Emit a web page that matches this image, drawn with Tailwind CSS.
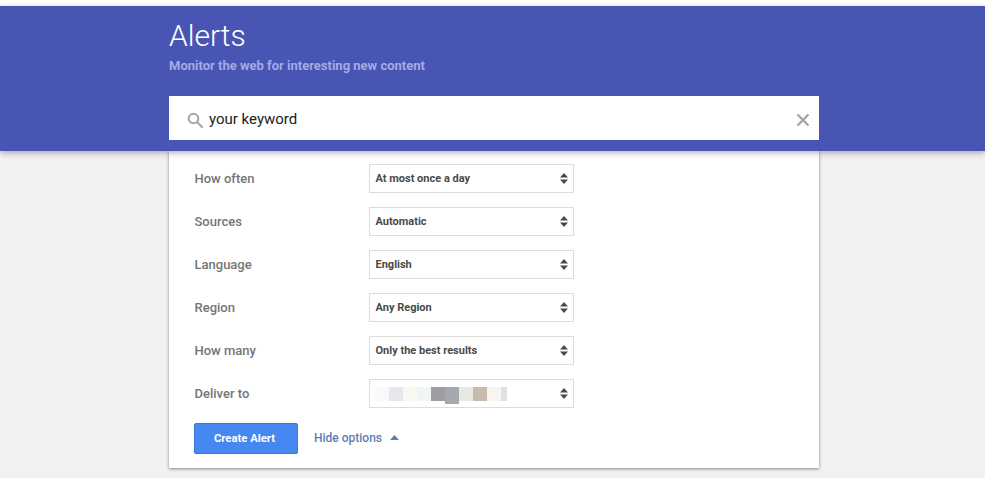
<!DOCTYPE html>
<html>
<head>
<meta charset="utf-8">
<script src="https://cdn.jsdelivr.net/npm/@tailwindcss/browser@4"></script>
</head>
<body class="m-0 h-[478px] w-[985px] overflow-hidden bg-[#f1f1f1] font-['Roboto',sans-serif]">
<div class="h-[6px] bg-white"></div>
<header class="relative z-10 h-[145px] bg-[#4855b3] shadow-[0_2px_6px_rgba(0,0,0,0.3)]">
  <div class="ml-[169px] w-[650px]">
    <h1 class="pt-[12px] text-[30px] leading-[36px] font-light text-white">Alerts</h1>
    <p class="mt-[3px] text-[13px] leading-[18px] font-bold text-[#a3abe6]">Monitor the web for interesting new content</p>
    <div class="mt-[21px] flex h-[44px] items-center bg-white pt-[3px] pr-[9px] pl-[18px]">
      <svg class="h-[16px] w-[16px] shrink-0" viewBox="0 0 16 16" fill="none" stroke="#a5a5a5" stroke-width="2"><circle cx="6.500" cy="6.500" r="4.800"/><path d="M10 10l5 5" stroke-linecap="round"/></svg>
      <span class="ml-[6px] flex-1 text-[15px] text-[#222]">your keyword</span>
      <svg class="h-[14px] w-[14px]" viewBox="0 0 14 14" stroke="#a5a5a5" stroke-width="2.400"><path d="M1.500 1.500l11 11M12.500 1.500l-11 11"/></svg>
    </div>
  </div>
</header>
<main class="ml-[169px] h-[317px] w-[650px] bg-white pt-[13px] pl-[25px] shadow-[0_1px_3px_rgba(0,0,0,0.45)]">
  <div class="flex flex-col gap-[14px]">
    <div class="flex items-center">
      <span class="w-[175px] pl-[0.5px] text-[13px] font-medium text-[#757575]">How often</span>
      <div class="flex h-[29px] w-[205px] items-center justify-between border border-[#dcdcdc] pr-[5px] pl-[5.500px] text-[11px] font-bold text-[#4a4a4a]">
        <span class="pt-[2px]">At most once a day</span>
        <svg class="h-[11px] w-[8px]" viewBox="0 0 8 11" fill="#4a4a4a"><path d="M4 0L8 4.500H0zM0 6.500h8L4 11z"/></svg>
      </div>
    </div>
    <div class="flex items-center">
      <span class="w-[175px] pl-[0.5px] text-[13px] font-medium text-[#757575]">Sources</span>
      <div class="flex h-[29px] w-[205px] items-center justify-between border border-[#dcdcdc] pr-[5px] pl-[5.500px] text-[11px] font-bold text-[#4a4a4a]">
        <span class="pt-[2px]">Automatic</span>
        <svg class="h-[11px] w-[8px]" viewBox="0 0 8 11" fill="#4a4a4a"><path d="M4 0L8 4.500H0zM0 6.500h8L4 11z"/></svg>
      </div>
    </div>
    <div class="flex items-center">
      <span class="w-[175px] pl-[0.5px] text-[13px] font-medium text-[#757575]">Language</span>
      <div class="flex h-[29px] w-[205px] items-center justify-between border border-[#dcdcdc] pr-[5px] pl-[5.500px] text-[11px] font-bold text-[#4a4a4a]">
        <span class="pt-[2px]">English</span>
        <svg class="h-[11px] w-[8px]" viewBox="0 0 8 11" fill="#4a4a4a"><path d="M4 0L8 4.500H0zM0 6.500h8L4 11z"/></svg>
      </div>
    </div>
    <div class="flex items-center">
      <span class="w-[175px] pl-[0.5px] text-[13px] font-medium text-[#757575]">Region</span>
      <div class="flex h-[29px] w-[205px] items-center justify-between border border-[#dcdcdc] pr-[5px] pl-[5.500px] text-[11px] font-bold text-[#4a4a4a]">
        <span class="pt-[2px]">Any Region</span>
        <svg class="h-[11px] w-[8px]" viewBox="0 0 8 11" fill="#4a4a4a"><path d="M4 0L8 4.500H0zM0 6.500h8L4 11z"/></svg>
      </div>
    </div>
    <div class="flex items-center">
      <span class="w-[175px] pl-[0.5px] text-[13px] font-medium text-[#757575]">How many</span>
      <div class="flex h-[29px] w-[205px] items-center justify-between border border-[#dcdcdc] pr-[5px] pl-[5.500px] text-[11px] font-bold text-[#4a4a4a]">
        <span class="pt-[2px]">Only the best results</span>
        <svg class="h-[11px] w-[8px]" viewBox="0 0 8 11" fill="#4a4a4a"><path d="M4 0L8 4.500H0zM0 6.500h8L4 11z"/></svg>
      </div>
    </div>
    <div class="flex items-center">
      <span class="w-[175px] pl-[0.5px] text-[13px] font-medium text-[#757575]">Deliver to</span>
      <div class="flex h-[29px] w-[205px] items-center justify-between border border-[#dcdcdc] pr-[5px] pl-[5px]">
        <div class="flex h-[14px] items-start">
          <i class="h-[14px] w-[14px] bg-[#f8f9fb]"></i>
          <i class="h-[14px] w-[14px] bg-[#e6e7ec]"></i>
          <i class="h-[14px] w-[14px] bg-[#fbf8f1]"></i>
          <i class="h-[14px] w-[14px] bg-[#f0f6f3]"></i>
          <i class="h-[14px] w-[14px] bg-[#9c9da0]"></i>
          <i class="h-[17px] w-[14px] bg-[#a5a8ad]"></i>
          <i class="h-[14px] w-[14px] bg-[#e8e8e4]"></i>
          <i class="h-[14px] w-[14px] bg-[#c9bbac]"></i>
          <i class="h-[14px] w-[14px] bg-[#f8f4f0]"></i>
          <i class="h-[14px] w-[6px] bg-[#e0e0e2]"></i>
        </div>
        <svg class="h-[11px] w-[8px]" viewBox="0 0 8 11" fill="#4a4a4a"><path d="M4 0L8 4.500H0zM0 6.500h8L4 11z"/></svg>
      </div>
    </div>
  </div>
  <div class="mt-[15px] flex items-center">
    <button class="h-[31px] w-[104px] rounded-[2px] border border-[#3a76d8] bg-[#4688f1] pt-[1px] pr-[3px] text-[11.300px] font-bold text-white">Create Alert</button>
    <span class="ml-[16px] pb-[2px] text-[12px] font-medium text-[#5b7fb5]">Hide options</span>
    <svg class="mb-[2px] ml-[8px] h-[5px] w-[9px]" viewBox="0 0 9 5" fill="#5b7fb5"><path d="M4.500 0L9 5H0z"/></svg>
  </div>
</main>
</body>
</html>
